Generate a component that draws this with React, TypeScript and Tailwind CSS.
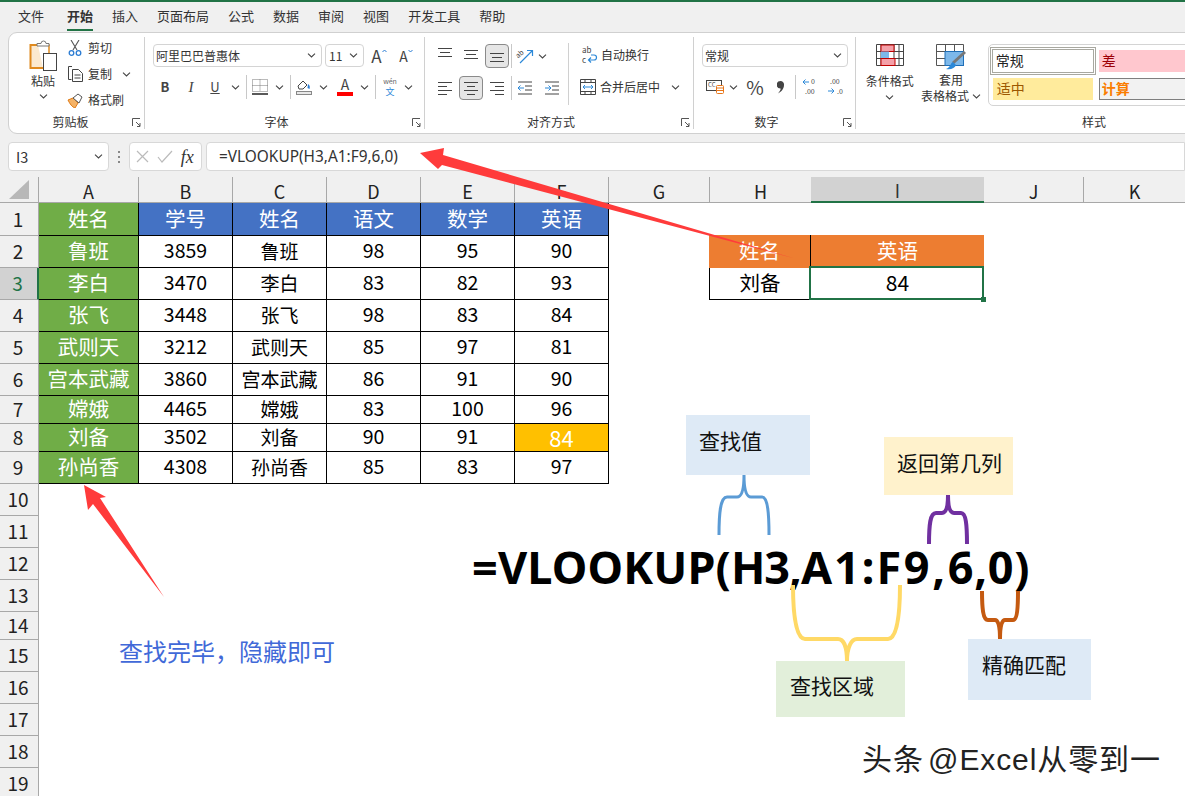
import type { ReactNode } from "react";

const Chev = ({ className = "" }: { className?: string }) => (
  <svg width="9" height="5" viewBox="0 0 9 5" className={className}>
    <path d="M1 .7l3.5 3.3L8 .7" fill="none" stroke="#444" strokeWidth="1.1" />
  </svg>
);

const Slot = ({ className, children }: { className: string; children?: ReactNode }) => (
  <div className={"flex h-full shrink-0 items-center justify-center " + className}>{children}</div>
);

const Sep = ({ className }: { className: string }) => (
  <Slot className={className}>
    <div className="h-[24px] w-px bg-[#c8c8c8]" />
  </Slot>
);

// text alignment glyph: list of [x1, x2, y]
const Lines = ({ d }: { d: number[][] }) => (
  <svg width="16" height="16" viewBox="0 0 16 16">
    {d.map(([a, b, y]) => (
      <path key={y} d={`M${a} ${y + 0.5}H${b}`} stroke="#444" strokeWidth="1" />
    ))}
  </svg>
);

const Launcher = () => (
  <svg width="9" height="9" viewBox="0 0 9 9" className="shrink-0">
    <path d="M.5 8V.5H8M4 4l4 4M8 5v3.5H5" fill="none" stroke="#555" strokeWidth="1" />
  </svg>
);

const Group = ({ label, className, labelClass = "", children }: { label: string; className: string; labelClass?: string; children: ReactNode }) => (
  <div className={"flex shrink-0 flex-col border-r border-[#d0d0d0] " + className}>
    <div className="min-h-0 flex-1">{children}</div>
    <div className="flex h-[14px] items-center pr-[3px]">
      <span className={"flex-1 text-center text-[12px] leading-[14px] text-[#333] " + labelClass}>{label}</span>
      <Launcher />
    </div>
  </div>
);

const Sel = ({ className, children }: { className: string; children: ReactNode }) => (
  <div className={"flex h-[23px] shrink-0 items-center justify-between rounded-[4px] border border-[#d4d4d4] bg-white pl-[2px] pr-[5px] text-[12px] text-[#333] " + className}>
    {children}
    <Chev />
  </div>
);

const Active = ({ children }: { children: ReactNode }) => (
  <div className="flex h-[24px] w-[24px] items-center justify-center rounded-[4px] border border-[#8a8a8a] bg-[#e6e6e6]">{children}</div>
);

const Clipboard = () => (
  <div className="flex h-full">
    <div className="ml-[18px] flex w-[32px] flex-col items-center pt-[3px]">
      <svg width="28" height="32" viewBox="0 0 28 32">
        <path d="M9 5H1.5v23H14" fill="#fbe9cf" stroke="#e08a1e" strokeWidth="2" />
        <path d="M9 5H20V14" fill="none" stroke="#e08a1e" strokeWidth="1.5" />
        <path d="M8 6V3.5H12a2.5 2.5 0 0 1 5 0H20V6z" fill="#fff" stroke="#777" />
        <rect x="14.5" y="13.5" width="13" height="17" fill="#fff" stroke="#444" />
      </svg>
      <span className="text-[12px] leading-[18px] text-[#333]">粘贴</span>
      <Chev className="mt-[4px]" />
    </div>
    <div className="-mt-[2px] ml-[9px] flex flex-col">
      <div className="flex h-[26px] items-center">
        <svg width="14" height="16" viewBox="0 0 14 16" className="mr-[6px]">
          <path d="M3 0l6 10M11 0L5 10" stroke="#555" strokeWidth="1.1" />
          <circle cx="3.5" cy="13" r="2.3" fill="none" stroke="#2b7cd3" strokeWidth="1.3" />
          <circle cx="10.5" cy="13" r="2.3" fill="none" stroke="#2b7cd3" strokeWidth="1.3" />
        </svg>
        <span className="text-[12px] text-[#333]">剪切</span>
      </div>
      <div className="flex h-[26px] items-center">
        <svg width="15" height="16" viewBox="0 0 15 16" className="mr-[5px]">
          <path d="M4 .5H.5v13H3.5" fill="none" stroke="#444" />
          <path d="M4.5 3.5h6l4 4v8h-10z" fill="#fff" stroke="#444" />
          <path d="M6.5 9h6M6.5 12h6" stroke="#444" />
        </svg>
        <span className="text-[12px] text-[#333]">复制</span>
        <Chev className="ml-[10px]" />
      </div>
      <div className="flex h-[26px] items-center">
        <svg width="16" height="15" viewBox="0 0 16 15" className="-ml-[1px] mr-[5px]">
          <path d="M1 7l5-2 5 5-3 5C5 14 3 11 1 7z" fill="#f4b266" stroke="#e07a14" />
          <path d="M6 5l5-4 4 3-3 6z" fill="#fff" stroke="#555" />
        </svg>
        <span className="text-[12px] text-[#333]">格式刷</span>
      </div>
    </div>
  </div>
);

const FontGroup = () => (
  <div className="pt-[7px]">
    <div className="flex h-[23px] items-center pl-[8px]">
      <Sel className="w-[169px]"><span>阿里巴巴普惠体</span></Sel>
      <Sel className="ml-[3px] w-[39px]"><span className="pl-[1px]">11</span></Sel>
      <Slot className="ml-[5px] w-[20px]">
        <span className="text-[17px] leading-none text-[#444]">A</span>
        <svg width="5" height="4" viewBox="0 0 5 4" className="mb-[9px]"><path d="M.5 3l2-2 2 2" fill="none" stroke="#2b7cd3" /></svg>
      </Slot>
      <Slot className="ml-[8px] w-[18px]">
        <span className="text-[14px] leading-none text-[#444]">A</span>
        <svg width="5" height="4" viewBox="0 0 5 4" className="mb-[9px]"><path d="M.5 1l2 2 2-2" fill="none" stroke="#2b7cd3" /></svg>
      </Slot>
    </div>
    <div className="mt-[8px] flex h-[24px] items-center pl-[7px] text-[#444]">
      <Slot className="w-[26px] text-[13px] font-bold">B</Slot>
      <Slot className="w-[26px] font-['Liberation_Serif',serif] text-[15px] italic">I</Slot>
      <Slot className="w-[22px] text-[13px] underline">U</Slot>
      <Slot className="w-[18px]"><Chev /></Slot>
      <Sep className="w-[4px]" />
      <Slot className="w-[24px]">
        <svg width="16" height="16" viewBox="0 0 16 16">
          <path d="M.5.5h15v12H.5zM8 .5v12M.5 6.5h15" fill="none" stroke="#777" strokeDasharray="1 1" />
          <path d="M0 15h16" stroke="#222" strokeWidth="1.5" />
        </svg>
      </Slot>
      <Slot className="w-[14px]"><Chev /></Slot>
      <Sep className="w-[8px]" />
      <Slot className="w-[20px]">
        <svg width="16" height="16" viewBox="0 0 16 16">
          <path d="M2 7l5-5 4 4-4 4H3z" fill="#fff" stroke="#444" />
          <path d="M12 5c2 1 2 3 1.5 5l-2-1z" fill="#2b7cd3" />
          <rect x=".5" y="12.5" width="15" height="3" fill="#e8e8e8" stroke="#888" />
        </svg>
      </Slot>
      <Slot className="w-[18px]"><Chev /></Slot>
      <Slot className="w-[26px] flex-col">
        <span className="text-[14px] leading-[13px]">A</span>
        <div className="mt-[1px] h-[4px] w-[16px] bg-[#ff0000]" />
      </Slot>
      <Slot className="w-[12px]"><Chev /></Slot>
      <Sep className="w-[10px]" />
      <Slot className="w-[20px] flex-col">
        <span className="text-[7px] leading-[9px] text-[#666]">wén</span>
        <span className="text-[9px] leading-[11px] text-[#2b88d8]">文</span>
      </Slot>
      <Slot className="w-[16px]"><Chev /></Slot>
    </div>
  </div>
);

const left = [[1, 15, 2], [1, 10, 6], [1, 15, 10], [1, 10, 14]];
const center = [[1, 15, 2], [4, 12, 6], [1, 15, 10], [4, 12, 14]];
const right = [[1, 15, 2], [6, 15, 6], [1, 15, 10], [6, 15, 14]];

const AlignGroup = () => (
  <div className="flex pt-[6px]">
    <div className="w-[143px] pt-[1px]">
      <div className="flex h-[24px] items-center pl-[12px]">
        <Slot className="w-[16px]"><Lines d={[[1, 15, 0], [3, 13, 4], [1, 15, 8]]} /></Slot>
        <Slot className="ml-[6px] w-[24px]"><Lines d={[[1, 15, 2], [3, 13, 6], [1, 15, 10]]} /></Slot>
        <Slot className="ml-[2px] w-[24px]"><Active><Lines d={[[1, 15, 5], [3, 13, 9], [1, 15, 13]]} /></Active></Slot>
        <Sep className="w-[4px]" />
        <Slot className="w-[24px]">
          <svg width="17" height="16" viewBox="0 0 17 16" className="overflow-visible">
            <text x="0" y="8" fontSize="7" fill="#444" transform="rotate(-40 4 8)">ab</text>
            <path d="M3 15L15 3M10 2.5h5.5V8" fill="none" stroke="#2b88d8" strokeWidth="1.2" />
          </svg>
        </Slot>
        <Slot className="w-[10px]"><Chev /></Slot>
      </div>
      <div className="mt-[8px] flex h-[24px] items-center pl-[12px]">
        <Slot className="w-[16px]"><Lines d={left} /></Slot>
        <Slot className="ml-[6px] w-[24px]"><Active><Lines d={center} /></Active></Slot>
        <Slot className="ml-[2px] w-[24px]"><Lines d={right} /></Slot>
        <Sep className="w-[4px]" />
        <Slot className="w-[24px]">
          <svg width="16" height="16" viewBox="0 0 16 16">
            <path d="M1 2h14M8 6h7M8 10h7M1 14h14" stroke="#444" />
            <path d="M7 8H1M3.5 5.5L1 8l2.5 2.5" fill="none" stroke="#2b88d8" />
          </svg>
        </Slot>
        <Slot className="ml-[3px] w-[24px]">
          <svg width="16" height="16" viewBox="0 0 16 16">
            <path d="M1 2h14M8 6h7M8 10h7M1 14h14" stroke="#444" />
            <path d="M1 8h6M4.5 5.5L7 8l-2.5 2.5" fill="none" stroke="#2b88d8" />
          </svg>
        </Slot>
      </div>
    </div>
    <div className="h-[62px] w-px bg-[#d0d0d0]" />
    <div className="pl-[11px] text-[12px] text-[#333]">
      <div className="flex h-[24px] items-center">
        <svg width="16" height="20" viewBox="0 0 16 20" className="ml-[2px] mr-[3px] overflow-visible">
          <text x="0" y="8" fontSize="8" fill="#444">ab</text>
          <text x="0" y="18" fontSize="8" fill="#444">c</text>
          <path d="M7 15h5a2.5 2.5 0 0 0 0-5H9M9 12.5L6.5 15 9 17.5" fill="none" stroke="#2b88d8" strokeWidth="1.2" />
        </svg>
        <span>自动换行</span>
      </div>
      <div className="mt-[8px] flex h-[24px] items-center">
        <svg width="16" height="16" viewBox="0 0 16 16" className="mr-[4px]">
          <path d="M.5 .5h15v15H.5z" fill="none" stroke="#444" />
          <path d="M.5 3.5h15M.5 12.5h15M5 .5v3M11 .5v3M5 12.5v3M11 12.5v3" stroke="#444" />
          <path d="M3 8h10M5 6L3 8l2 2M11 6l2 2-2 2" fill="none" stroke="#2b88d8" />
        </svg>
        <span>合并后居中</span>
        <Chev className="ml-[11px]" />
      </div>
    </div>
  </div>
);

const NumberGroup = () => (
  <div className="pt-[7px]">
    <Sel className="ml-[8px] w-[146px]"><span>常规</span></Sel>
    <div className="ml-[8px] mt-[8px] flex h-[24px] items-center">
      <Slot className="w-[27px]">
        <svg width="20" height="14" viewBox="0 0 20 14" className="overflow-visible">
          <rect x=".5" y=".5" width="15" height="10" fill="#fff" stroke="#444" />
          <text x="2" y="7" fontSize="6" fill="#444">CC</text>
          <rect x="10.5" y="5.5" width="7" height="8" rx="1" fill="#fff" stroke="#e8761a" />
          <path d="M10.5 8h7M10.5 10.5h7" stroke="#e8761a" />
        </svg>
      </Slot>
      <Slot className="w-[9px]"><Chev /></Slot>
      <Slot className="ml-[4px] w-[26px] text-[19px] text-[#444]">%</Slot>
      <Slot className="w-[26px]">
        <svg width="8" height="13" viewBox="0 0 8 13"><path d="M3.5 0a3.5 3.5 0 0 1 3.5 4c0 4-3 7-6 8.5C3 10 4 8.5 3.5 7.5A3.5 3.5 0 0 1 3.5 0z" fill="#444" /></svg>
      </Slot>
      <Sep className="w-[3px]" />
      <Slot className="w-[25px]">
        <svg width="16" height="18" viewBox="0 0 16 18" className="overflow-visible">
          <path d="M1 4h6M3.5 1.5L1 4l2.5 2.5" fill="none" stroke="#2b88d8" />
          <text x="9" y="6" fontSize="7" fill="#444">0</text>
          <text x="3" y="16" fontSize="7" fill="#444">.00</text>
        </svg>
      </Slot>
      <Slot className="w-[26px]">
        <svg width="16" height="18" viewBox="0 0 16 18" className="overflow-visible">
          <text x="3" y="6" fontSize="7" fill="#444">.00</text>
          <path d="M1 13h6M4.5 10.5L7 13l-2.5 2.5" fill="none" stroke="#2b88d8" />
          <text x="10" y="16" fontSize="7" fill="#444">.0</text>
        </svg>
      </Slot>
    </div>
  </div>
);

const StylesGroup = () => (
  <div className="flex pt-[7px] text-[12px] text-[#333]">
    <div className="ml-[4px] flex w-[60px] flex-col items-center">
      <svg width="28" height="23" viewBox="0 0 28 23">
        <path d="M.5.5h27v21H.5zM5 .5v21M18 .5v21M23 .5v21M.5 7.5h27M.5 14.5h27" fill="#fff" stroke="#444" />
        <rect x="5" y="1" width="13" height="6.5" fill="#f4a0a8" stroke="#c00000" />
        <rect x="5" y="7.5" width="8" height="7" fill="#7db8ea" />
        <rect x="5" y="14.5" width="14" height="7" fill="#f4a0a8" stroke="#c00000" />
      </svg>
      <span className="mt-[6px] leading-[16px]">条件格式</span>
      <Chev className="mt-[6px]" />
    </div>
    <div className="flex w-[64px] flex-col items-center">
      <svg width="32" height="26" viewBox="0 0 32 26">
        <path d="M1.5.5h27v21h-27zM10.5.5v21M19.5.5v21M1.5 7.5h27M1.5 14.5h27" fill="#fff" stroke="#555" />
        <rect x="10" y="7.5" width="18.5" height="14" fill="#7db8ea" stroke="#1f6fb8" />
        <path d="M30 8L18 19" stroke="#777" strokeWidth="3" />
        <path d="M18 18c-3 1-2 5-7 7 5 1 9-1 10-4z" fill="#2b88d8" />
      </svg>
      <span className="mt-[2px] leading-[16px]">套用</span>
      <span className="flex items-center leading-[16px]">表格格式<Chev className="ml-[3px]" /></span>
    </div>
    <div className="ml-[5px] grid h-[62px] w-[360px] grid-cols-[106px_1fr] grid-rows-[30px_30px] rounded-l-[5px] border border-[#d4d4d4] pl-[1px] text-[14px] leading-[20px]">
      <div className="mt-[2px] flex h-[28px] items-center border-[3px] border-double border-[#a8a8a0] pb-[3px] pl-[3px] text-[#222]">常规</div>
      <div className="ml-[3px] mt-[5px] flex h-[22px] items-center bg-[#ffc7ce] pb-[3px] pl-[3px] text-[#9c0006]">差</div>
      <div className="ml-[3px] mr-[3px] mt-[3px] flex h-[22px] items-center bg-[#ffeb9c] pb-[3px] pl-[4px] text-[#9c5700]">适中</div>
      <div className="ml-[3px] mt-[3px] flex h-[22px] items-center border border-[#7f7f7f] bg-[#f2f2f2] pb-[3px] pl-[2px] font-bold text-[#fa7d00]">计算</div>
    </div>
  </div>
);

const names = ["鲁班", "李白", "张飞", "武则天", "宫本武藏", "嫦娥", "刘备", "孙尚香"];
const rows = [
  [3859, 98, 95, 90],
  [3470, 83, 82, 93],
  [3448, 98, 83, 84],
  [3212, 85, 97, 81],
  [3860, 86, 91, 90],
  [4465, 83, 100, 96],
  [3502, 90, 91, 84],
  [4308, 85, 83, 97],
];
const cols = ["A", "B", "C", "D", "E", "F", "G", "H", "I", "J", "K"];
const tall = Array.from({ length: 19 }, (_, i) => i + 1);

const cell = "flex items-center justify-center border-b border-r border-black pb-[2px] ";
const Blue = ({ t }: { t: string }) => <div className={cell + "bg-[#4472c4] text-[20.5px] text-white"}>{t}</div>;
const Val = ({ t }: { t: string | number }) => <div className="flex items-center justify-center border-b border-r border-black pb-[3px] text-[19.5px]">{t}</div>;

const RowHead = ({ n }: { n: number }) => (
  <div className={"col-start-1 flex items-center justify-center border-b border-r border-[#a8a8a8] pb-[2px] pr-[2px] text-[19px] " + (n === 3 ? "border-r-2 border-r-[#217346] bg-[#d2d2d2] text-[#217346]" : "bg-[#f0f0f0] text-[#222]")}>
    {n}
  </div>
);

const Sheet = () => (
  <div className="grid grid-cols-[39px_100px_94px_94px_94px_94px_94px_100px_102px_173px_100px_101px] grid-rows-[26px_33px_32px_32px_32px_32px_32px_28px_28px_32px_32px_32px_32px_32px_28px_32px_32px_32px_32px_32px] bg-white leading-none text-black">
    <div className="flex items-center justify-center border-b border-r border-[#a8a8a8] bg-[#f0f0f0]">
      <svg width="20" height="19" viewBox="0 0 20 19" className="ml-[-1px]"><path d="M20 0v19H0z" fill="#b8b8b8" /></svg>
    </div>
    {cols.map((c) => (
      <div
        key={c}
        className={
          "flex items-center justify-center border-b pt-[2px] text-[18px] " +
          (c === "I"
            ? "border-b-2 border-[#217346] bg-[#d2d2d2] text-[#333]"
            : c === "G" || c === "K"
              ? "border-[#a8a8a8] bg-[#f0f0f0] text-[#222]"
              : c === "H"
                ? "border-b border-l border-[#a8a8a8] bg-[#f0f0f0] text-[#222]"
                : "border-b border-r border-[#a8a8a8] bg-[#f0f0f0] text-[#222]")
        }
      >
        {c}
      </div>
    ))}

    {tall.map((n) => {
      const i = n - 2;
      return [
        <RowHead key={"h" + n} n={n} />,
        n === 1 && [
          <div key="a1" className={cell + "bg-[#70ad47] text-[20.5px] text-white"}>姓名</div>,
          ...["学号", "姓名", "语文", "数学", "英语"].map((t, j) => <Blue key={j} t={t} />),
        ],
        n >= 2 && n <= 9 && [
          <div key={"a" + n} className={cell + "bg-[#70ad47] text-[20.5px] text-white"}>{names[i]}</div>,
          <Val key={"b" + n} t={rows[i][0]} />,
          <div key={"c" + n} className={cell + "text-[19px]"}>{names[i]}</div>,
          <Val key={"d" + n} t={rows[i][1]} />,
          <Val key={"e" + n} t={rows[i][2]} />,
          n === 8
            ? <div key="f8" className={cell + "bg-[#ffc000] text-[22px] text-white"}>84</div>
            : <Val key={"f" + n} t={rows[i][3]} />,
        ],
        n === 2 && [
          <div key="h2" className="col-start-9 -mt-px flex items-center justify-center border-r border-black bg-[#ed7d31] pb-[2px] text-[20.5px] text-white">姓名</div>,
          <div key="i2" className="-mt-px flex items-center justify-center bg-[#ed7d31] pb-[2px] text-[20.5px] text-white">英语</div>,
        ],
        n === 3 && [
          <div key="h3" className="col-start-9 flex items-center justify-center border-b border-l border-r border-black pb-[3px] text-[20.5px]">刘备</div>,
          <div key="i3" className="relative flex items-center justify-center pb-[4px] text-[21px]">
            84
            <div className="absolute -left-[2px] -top-[2px] bottom-0 right-0 border-2 border-[#217346]" />
            <div className="absolute -bottom-[2px] -right-[2px] h-[5px] w-[5px] bg-[#217346]" />
          </div>,
        ],
      ];
    })}
  </div>
);

const Callout = ({ className, text }: { className: string; text: string }) => (
  <div className={"absolute text-[21px] leading-[28px] text-[#111] " + className}>{text}</div>
);

export default function App() {
  return (
    <div className="relative h-[796px] w-[1185px] overflow-hidden bg-[#f0f0f0] font-['Noto_Sans_CJK_SC','Noto_Sans',sans-serif]">
      <div className="h-[2px] bg-[#217346]" />
      <div className="flex h-[30px] items-center gap-[19px] pb-[3px] pl-[18px] text-[13px] text-[#333]">
        <span className="mr-[4px]">文件</span>
        <span className="relative font-bold">
          开始
          <span className="absolute bottom-[-6px] left-0 right-0 h-[2px] bg-[#217346]" />
        </span>
        <span>插入</span>
        <span>页面布局</span>
        <span>公式</span>
        <span>数据</span>
        <span>审阅</span>
        <span>视图</span>
        <span>开发工具</span>
        <span>帮助</span>
      </div>

      <div className="ml-[8px] flex h-[102px] w-[1340px] rounded-l-[9px] border border-[#d0d0d0] bg-white py-[4px]">
        <Group label="剪贴板" className="w-[136px]"><Clipboard /></Group>
        <Group label="字体" className="w-[280px]" labelClass="pr-[4px]"><FontGroup /></Group>
        <Group label="对齐方式" className="w-[269px]" labelClass="pr-[4px]"><AlignGroup /></Group>
        <Group label="数字" className="w-[162px]" labelClass="pr-[4px]"><NumberGroup /></Group>
        <Group label="样式" className="w-[488px] border-r-0"><StylesGroup /></Group>
      </div>

      <div className="ml-[8px] mt-[8px] flex h-[29px] items-stretch">
        <div className="flex w-[102px] items-center justify-between rounded-[4px] border border-[#d8d8d8] bg-white pl-[7px] pr-[5px] text-[14.5px] text-[#333]">
          I3
          <Chev />
        </div>
        <div className="flex w-[20px] flex-col items-center justify-center gap-[3px]">
          <i className="h-[2px] w-[2px] bg-[#888]" />
          <i className="h-[2px] w-[2px] bg-[#888]" />
          <i className="h-[2px] w-[2px] bg-[#888]" />
        </div>
        <div className="flex w-[74px] items-center rounded-[4px] border border-[#d8d8d8] bg-white pl-[6px]">
          <svg width="13" height="13" viewBox="0 0 13 13"><path d="M1 1l11 11M12 1L1 12" stroke="#bbb" strokeWidth="1.2" /></svg>
          <svg width="16" height="13" viewBox="0 0 16 13" className="ml-[8px]"><path d="M1 7l4 5L15 1" fill="none" stroke="#bbb" strokeWidth="1.2" /></svg>
          <span className="ml-[8px] font-['Liberation_Serif',serif] text-[18px] italic leading-none text-[#333]">fx</span>
        </div>
        <div className="ml-[4px] flex w-[990px] items-center rounded-l-[4px] border border-[#d8d8d8] bg-white pl-[12px] font-['Noto_Sans',sans-serif] text-[15.4px] text-[#333]">
          =VLOOKUP(H3,A1:F9,6,0)
        </div>
      </div>

      <div className="mt-[6px]"><Sheet /></div>

      <Callout className="left-[686px] top-[415px] h-[60px] w-[124px] bg-[#deeaf6] pl-[13px] pt-[11px]" text="查找值" />
      <Callout className="left-[884px] top-[437px] h-[58px] w-[129px] bg-[#fff2cc] pl-[13px] pt-[11px]" text="返回第几列" />
      <Callout className="left-[776px] top-[661px] h-[56px] w-[129px] bg-[#e2efda] pl-[14px] pt-[10px]" text="查找区域" />
      <Callout className="left-[968px] top-[639px] h-[61px] w-[123px] bg-[#deeaf6] pl-[14px] pt-[11px]" text="精确匹配" />

      <div className="absolute left-[472px] top-[536px] whitespace-nowrap font-['Noto_Sans',sans-serif] text-[45px] font-bold leading-[62px] text-black">
        <span className="tracking-[0.15px]">=VLOOKUP(</span>
        <span className="tracking-[-1px]">H3,</span>
        <span className="tracking-[2px]">A1:</span>
        <span className="tracking-[2.7px]">F9,</span>
        <span className="tracking-[0.7px]">6,0)</span>
      </div>
      <div className="absolute left-[119px] top-[635px] text-[24px] leading-[32px] text-[#4169d8]">查找完毕，隐藏即可</div>
      <div className="absolute left-[862px] top-[740px] whitespace-nowrap font-['Liberation_Sans','Noto_Sans_CJK_SC',sans-serif] text-[30px] leading-[40px] tracking-[0.9px] text-[#222] [word-spacing:-5px]">头条 @Excel从零到一</div>

      <svg width="1185" height="796" viewBox="0 0 1185 796" className="pointer-events-none absolute left-0 top-0">
        <polygon points="420,153 444,148 443,155 793,258 442,165 438,169" fill="#ff3b3b" />
        <polygon points="84,485 106,497 100,498 164,597 93,504 88,510" fill="#ff3b3b" />
        <g fill="none" strokeWidth="3">
          <path stroke="#5b9bd5" d="M719 535C719 515 720 497 727 497H737C742 497 744 490 744 475C744 490 746 497 751 497H762C768 497 769 515 769 535" />
          <path stroke="#7030a0" strokeWidth="4" d="M929 544C929 525 930 513 936 513H942C946 513 948 507 948 495C948 507 950 513 954 513H961C966 513 967 525 967 544" />
          <path stroke="#ffd966" strokeWidth="4" d="M793 585C793 615 796 639 805 639H838C844 639 847 648 847 661C847 648 851 639 857 639H888C897 639 900 615 900 585" />
          <path stroke="#c55a11" strokeWidth="4" d="M982 591C982 608 983 620 988 620H995C998 620 1000 625 1000 639C1000 625 1002 620 1005 620H1013C1017 620 1018 608 1018 591" />
        </g>
      </svg>
    </div>
  );
}
